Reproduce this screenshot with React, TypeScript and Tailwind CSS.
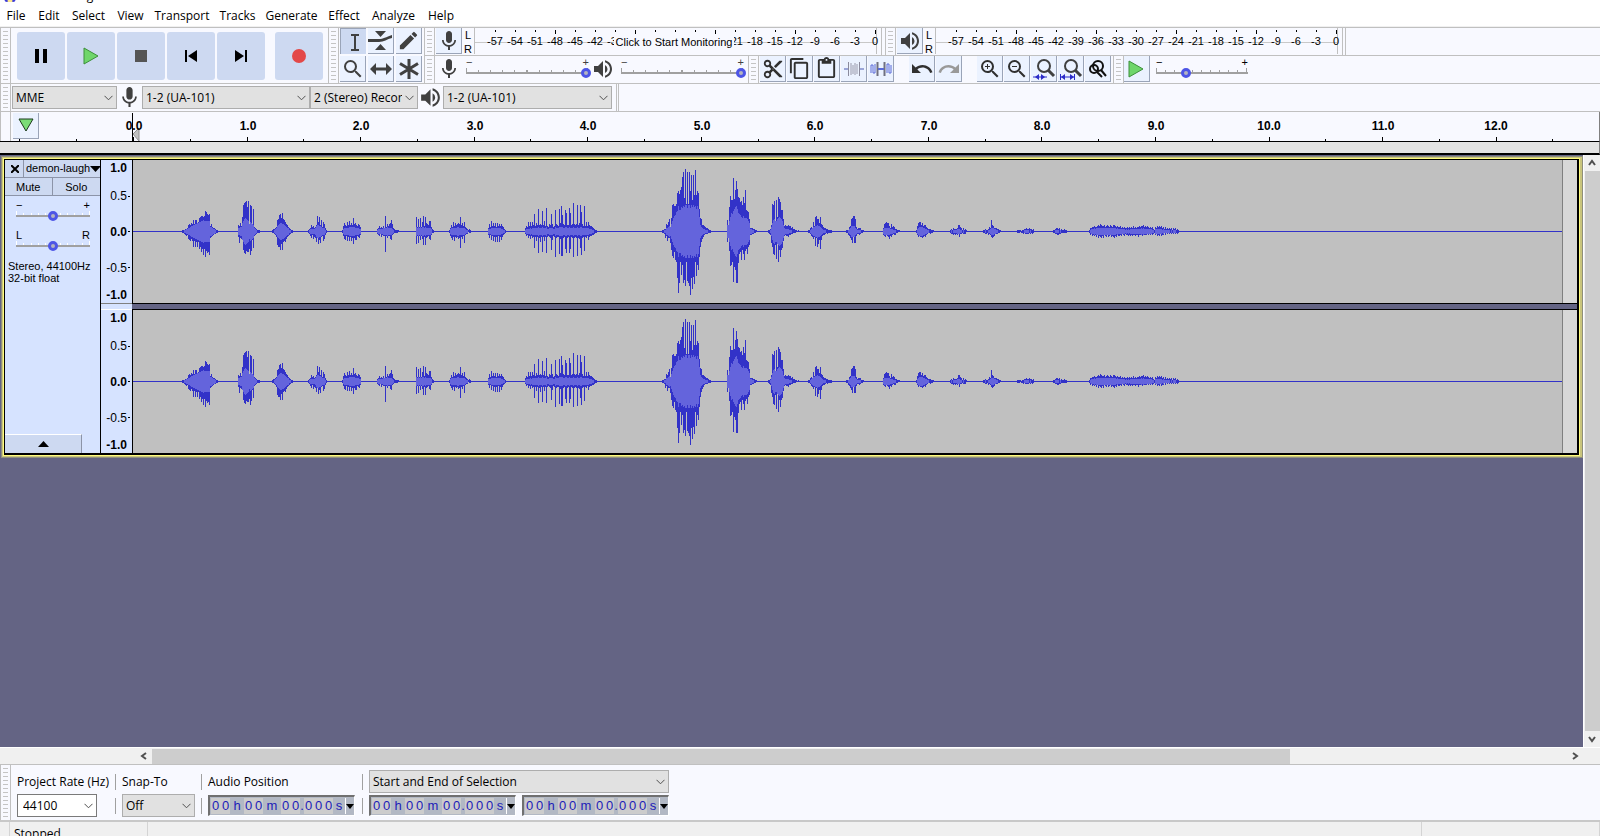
import type { ReactNode } from 'react'
import {
  MdContentCopy,
  MdContentCut,
  MdContentPaste,
  MdEdit,
  MdMic,
  MdRedo,
  MdSearch,
  MdUndo,
  MdVolumeUp,
  MdZoomIn,
  MdZoomOut,
} from 'react-icons/md'

const menus = [
  { label: 'File', width: 'w-[32px]' },
  { label: 'Edit', width: 'w-[34px]' },
  { label: 'Select', width: 'w-[45px]' },
  { label: 'View', width: 'w-[39px]' },
  { label: 'Transport', width: 'w-[64px]' },
  { label: 'Tracks', width: 'w-[47px]' },
  { label: 'Generate', width: 'w-[61px]' },
  { label: 'Effect', width: 'w-[44px]' },
  { label: 'Analyze', width: 'w-[55px]' },
  { label: 'Help', width: 'w-[40px]' },
]

const meterLabels = [
  '-57', '-54', '-51', '-48', '-45', '-42', '-39', '-36', '-33', '-30',
  '-27', '-24', '-21', '-18', '-15', '-12', '-9', '-6', '-3', '0',
]

type Burst = { x: number; up: number[]; down: number[]; rms: number[] }

// One number per pixel column: peak above, peak below, rms
const bursts: Burst[] = [
  {
    x: 182,
    up: [1, 1, 1, 2, 2, 3, 6, 7, 6, 8, 7, 11, 7, 11, 11, 8, 9, 13, 14, 15, 15, 14, 15, 20, 19, 17, 16, 17, 5, 7, 4, 3, 3, 2, 1, 1],
    down: [1, 1, 2, 3, 4, 3, 7, 8, 9, 7, 9, 15, 9, 15, 10, 15, 10, 17, 15, 20, 17, 23, 17, 25, 19, 21, 20, 23, 6, 5, 4, 3, 2, 2, 1, 1],
    rms: [0, 0, 1, 1, 2, 2, 3, 3, 4, 5, 5, 6, 6, 7, 7, 8, 8, 9, 9, 10, 10, 11, 10, 10, 10, 10, 10, 10, 4, 4, 3, 2, 2, 1, 0, 0],
  },
  {
    x: 238,
    up: [6, 5, 8, 5, 14, 26, 28, 29, 30, 24, 30, 7, 26, 25, 7, 22, 4, 3, 2, 1, 1, 1],
    down: [5, 11, 6, 7, 8, 18, 21, 22, 19, 20, 20, 17, 23, 19, 8, 16, 4, 3, 2, 1, 1, 1],
    rms: [3, 3, 4, 4, 8, 10, 12, 13, 12, 11, 10, 7, 9, 8, 7, 6, 3, 2, 1, 0, 0, 0],
  },
  {
    x: 272,
    up: [1, 2, 2, 3, 4, 11, 12, 16, 17, 13, 18, 12, 11, 9, 7, 6, 4, 3, 2, 1, 1],
    down: [1, 1, 2, 3, 5, 13, 15, 15, 18, 12, 18, 10, 9, 10, 7, 5, 4, 3, 2, 1, 1],
    rms: [0, 0, 1, 2, 3, 5, 6, 7, 8, 8, 7, 7, 6, 5, 4, 3, 3, 1, 1, 0, 0],
  },
  {
    x: 308,
    up: [1, 2, 3, 6, 4, 5, 3, 4, 6, 15, 9, 14, 6, 11, 4, 9, 7, 3, 1],
    down: [1, 2, 4, 6, 3, 7, 5, 6, 10, 6, 12, 8, 11, 5, 4, 9, 7, 3, 1],
    rms: [0, 1, 2, 2, 2, 2, 2, 3, 5, 6, 6, 5, 5, 4, 3, 3, 3, 1, 0],
  },
  {
    x: 342,
    up: [1, 5, 8, 6, 5, 9, 6, 10, 6, 8, 6, 13, 7, 8, 6, 5, 7, 6, 4],
    down: [1, 4, 7, 8, 4, 9, 5, 9, 5, 9, 6, 12, 6, 8, 8, 4, 5, 6, 3],
    rms: [0, 2, 3, 3, 3, 3, 3, 4, 4, 4, 4, 4, 4, 3, 3, 3, 3, 2, 2],
  },
  {
    x: 377,
    up: [2, 3, 5, 3, 4, 3, 5, 3, 15, 4, 7, 5, 7, 8, 11, 7, 3, 2, 1, 1, 1, 1],
    down: [2, 3, 4, 2, 5, 3, 4, 4, 20, 4, 6, 4, 4, 7, 8, 3, 2, 1, 1, 1, 1, 0],
    rms: [1, 2, 2, 2, 2, 2, 3, 3, 3, 3, 4, 3, 3, 3, 3, 2, 1, 0, 0, 0, 0, 0],
  },
  {
    x: 416,
    up: [14, 4, 12, 4, 13, 4, 9, 15, 5, 14, 8, 7, 6, 10, 10, 4, 2, 1],
    down: [12, 4, 11, 4, 8, 4, 7, 13, 5, 13, 6, 5, 4, 7, 8, 3, 1, 1],
    rms: [4, 3, 4, 3, 4, 3, 4, 4, 3, 4, 3, 3, 3, 3, 3, 2, 0, 0],
  },
  {
    x: 449,
    up: [1, 3, 6, 4, 9, 5, 8, 6, 7, 8, 7, 14, 6, 8, 5, 9, 4, 3, 2, 1, 2, 1],
    down: [1, 4, 6, 8, 5, 9, 5, 6, 5, 7, 6, 16, 5, 7, 4, 11, 3, 2, 2, 0, 1, 1],
    rms: [0, 2, 3, 3, 3, 3, 3, 3, 4, 4, 3, 3, 3, 3, 3, 3, 2, 1, 1, 0, 0, 0],
  },
  {
    x: 488,
    up: [3, 7, 4, 10, 5, 8, 5, 8, 4, 8, 5, 7, 5, 7, 5, 4, 2, 1],
    down: [3, 6, 3, 8, 4, 9, 5, 10, 5, 10, 4, 10, 5, 8, 5, 3, 2, 1],
    rms: [2, 2, 2, 3, 3, 3, 3, 3, 3, 3, 3, 3, 3, 2, 2, 1, 1, 0],
  },
  {
    x: 525,
    up: [
      3, 5, 4, 9, 5, 9, 5, 9, 6, 17, 5, 8, 6, 22, 6, 7, 6, 20, 6, 10, 5, 23, 5, 4, 7, 6, 17, 7, 4, 5, 21, 7, 6, 5, 22, 8,
      25, 16, 7, 6, 21, 18, 6, 6, 23, 18, 6, 7, 28, 7, 6, 7, 26, 6, 8, 26, 19, 7, 5, 25, 5, 9, 5, 9, 6, 5, 5, 4, 3, 2, 1, 1,
    ],
    down: [
      2, 4, 3, 6, 4, 7, 4, 6, 5, 16, 5, 9, 5, 21, 6, 10, 5, 20, 5, 9, 5, 21, 5, 4, 5, 6, 18, 8, 4, 5, 25, 6, 5, 5, 22, 7,
      24, 24, 6, 5, 17, 21, 6, 5, 21, 17, 5, 6, 25, 6, 5, 6, 24, 6, 7, 16, 23, 6, 5, 19, 5, 6, 4, 8, 5, 4, 4, 3, 3, 2, 1, 1,
    ],
    rms: [
      1, 2, 2, 2, 2, 3, 2, 3, 3, 3, 3, 3, 3, 4, 3, 3, 3, 4, 3, 3, 3, 4, 2, 2, 3, 3, 3, 3, 2, 2, 4, 3, 3, 3, 4, 4,
      4, 4, 3, 3, 4, 4, 3, 3, 4, 3, 3, 3, 4, 3, 3, 3, 4, 3, 3, 4, 4, 3, 3, 3, 3, 3, 3, 3, 2, 2, 2, 1, 1, 0, 0, 0,
    ],
  },
  {
    x: 662,
    up: [
      1, 1, 2, 2, 7, 6, 9, 12, 4, 13, 26, 27, 25, 25, 27, 38, 40, 37, 41, 44, 54, 59, 33, 62, 27, 59, 27, 59, 40, 56, 31, 56,
      36, 61, 36, 40, 38, 22, 13, 12, 6, 6, 5, 4, 3, 3, 2, 1, 1,
    ],
    down: [
      1, 1, 2, 6, 4, 9, 6, 6, 11, 18, 24, 26, 20, 28, 30, 46, 61, 51, 30, 43, 33, 51, 48, 54, 30, 49, 51, 54, 63, 46, 57, 45,
      52, 30, 44, 33, 38, 25, 15, 10, 7, 5, 3, 2, 2, 2, 1, 1, 1,
    ],
    rms: [
      0, 0, 1, 1, 3, 3, 4, 5, 4, 7, 10, 13, 15, 16, 19, 20, 25, 21, 21, 24, 23, 25, 24, 26, 26, 23, 26, 26, 23, 26, 24, 26,
      24, 25, 22, 25, 22, 14, 6, 4, 3, 2, 2, 1, 1, 1, 0, 0, 0,
    ],
  },
  {
    x: 727,
    up: [11, 6, 24, 35, 31, 31, 53, 32, 41, 50, 42, 34, 33, 29, 30, 26, 34, 28, 41, 21, 20, 19, 12, 3, 3, 3, 2, 2, 1, 1],
    down: [10, 6, 19, 34, 33, 30, 50, 35, 38, 51, 51, 31, 22, 20, 28, 18, 22, 28, 19, 17, 22, 15, 13, 3, 3, 2, 2, 1, 1, 0],
    rms: [6, 6, 10, 14, 18, 17, 20, 22, 24, 25, 22, 18, 17, 16, 14, 13, 15, 13, 13, 13, 12, 10, 8, 2, 2, 1, 1, 0, 0, 0],
  },
  {
    x: 768,
    up: [1, 1, 2, 6, 27, 26, 30, 8, 31, 14, 34, 32, 29, 21, 21, 12, 5, 6, 5, 5, 6, 5, 5, 3, 4, 2, 2, 1, 1, 0, 1],
    down: [1, 2, 3, 11, 15, 22, 23, 13, 27, 12, 30, 18, 25, 18, 16, 9, 4, 3, 4, 4, 5, 3, 3, 2, 2, 1, 1, 1, 0, 0, 0],
    rms: [0, 0, 1, 4, 8, 11, 12, 10, 10, 12, 13, 14, 13, 12, 10, 6, 3, 2, 2, 2, 2, 1, 1, 1, 0, 0, 0, 0, 0, 0, 0],
  },
  {
    x: 808,
    up: [1, 1, 3, 4, 3, 9, 5, 14, 15, 12, 12, 8, 14, 7, 6, 4, 3, 3, 2, 2, 1, 1, 1, 1],
    down: [1, 1, 2, 4, 5, 7, 5, 14, 6, 15, 12, 8, 17, 8, 4, 3, 3, 2, 1, 2, 1, 1, 1, 1],
    rms: [0, 0, 1, 2, 3, 4, 4, 5, 5, 6, 5, 5, 4, 3, 2, 1, 1, 1, 0, 0, 0, 0, 0, 0],
  },
  {
    x: 846,
    up: [1, 1, 1, 4, 5, 12, 13, 15, 15, 12, 4, 2, 3, 3, 3, 1, 1, 1],
    down: [1, 1, 3, 4, 6, 8, 11, 5, 11, 11, 4, 2, 2, 3, 2, 1, 1, 0],
    rms: [0, 0, 1, 2, 3, 5, 5, 5, 5, 3, 2, 1, 1, 1, 1, 0, 0, 0],
  },
  {
    x: 883,
    up: [3, 7, 8, 9, 8, 8, 5, 3, 7, 4, 5, 4, 2, 2, 1, 1, 1],
    down: [3, 4, 5, 3, 4, 5, 7, 4, 5, 3, 2, 3, 3, 1, 1, 0, 0],
    rms: [2, 3, 3, 3, 3, 3, 3, 2, 2, 2, 1, 1, 1, 0, 0, 0, 0],
  },
  {
    x: 916,
    up: [1, 5, 8, 9, 9, 6, 8, 5, 6, 6, 4, 3, 2, 2, 2, 1, 1, 1],
    down: [1, 3, 5, 4, 5, 5, 6, 5, 4, 5, 3, 2, 1, 1, 2, 1, 1, 0],
    rms: [0, 2, 3, 4, 4, 4, 4, 3, 3, 2, 2, 1, 1, 0, 0, 0, 0, 0],
  },
  {
    x: 950,
    up: [1, 2, 1, 3, 2, 2, 2, 3, 6, 6, 4, 3, 1, 3, 1, 2, 1],
    down: [1, 2, 2, 3, 2, 3, 2, 3, 2, 5, 2, 2, 1, 2, 2, 2, 0],
    rms: [0, 1, 0, 1, 1, 1, 1, 2, 2, 2, 1, 1, 0, 1, 0, 0, 0],
  },
  {
    x: 983,
    up: [1, 1, 2, 1, 1, 2, 4, 3, 11, 6, 5, 3, 3, 3, 2, 2, 1, 1],
    down: [1, 1, 2, 2, 1, 3, 2, 3, 5, 6, 5, 4, 2, 2, 2, 1, 1, 0],
    rms: [0, 0, 1, 0, 0, 1, 1, 2, 3, 3, 3, 2, 2, 1, 1, 0, 0, 0],
  },
  {
    x: 1017,
    up: [1, 1, 1, 1, 0, 1, 1, 2, 2, 3, 2, 2, 3, 2, 2, 1, 2],
    down: [1, 1, 1, 0, 1, 1, 2, 1, 2, 2, 2, 2, 1, 2, 1, 2, 1],
    rms: [0, 0, 0, 0, 0, 0, 0, 1, 1, 1, 1, 1, 0, 1, 0, 0, 0],
  },
  {
    x: 1053,
    up: [1, 1, 2, 3, 3, 2, 3, 1, 2, 1, 1, 2, 1, 1],
    down: [1, 1, 2, 2, 3, 3, 2, 2, 1, 1, 1, 1, 1, 1],
    rms: [0, 0, 1, 1, 1, 1, 0, 1, 0, 0, 0, 0, 0, 0],
  },
  {
    x: 1089,
    up: [
      1, 3, 3, 4, 4, 5, 4, 4, 5, 6, 5, 7, 6, 5, 5, 6, 4, 5, 6, 5, 4, 6, 5, 4, 6, 6, 5, 4, 5, 4, 4, 5, 3, 4, 3, 4, 3, 3, 4, 3,
      4, 3, 4, 3, 5, 3, 4, 3, 4, 4, 5, 4, 5, 5, 6, 4, 5, 4, 5, 4, 3, 4, 3, 4, 2, 1, 4, 3, 5, 4, 5, 4, 5, 3, 4, 2, 4, 2, 3, 2,
      3, 2, 3, 1, 3, 2, 3, 1, 2, 1,
    ],
    down: [
      1, 3, 2, 4, 3, 4, 3, 5, 3, 6, 4, 5, 6, 4, 6, 3, 4, 5, 3, 5, 4, 3, 5, 4, 5, 6, 4, 5, 3, 4, 4, 3, 4, 2, 3, 4, 2, 3, 3, 4,
      3, 4, 3, 4, 3, 3, 4, 3, 3, 5, 3, 3, 3, 4, 3, 3, 3, 3, 2, 3, 2, 3, 2, 3, 2, 1, 3, 2, 4, 3, 4, 2, 4, 3, 3, 1, 3, 1, 2, 1,
      2, 1, 2, 1, 2, 1, 2, 1, 2, 1,
    ],
    rms: [
      0, 1, 2, 2, 2, 3, 2, 3, 3, 3, 3, 3, 3, 3, 3, 3, 3, 3, 3, 3, 3, 3, 3, 3, 3, 3, 3, 2, 3, 2, 2, 2, 2, 2, 2, 2, 1, 2, 1, 2,
      1, 2, 2, 2, 2, 2, 2, 2, 2, 2, 2, 2, 3, 2, 3, 2, 2, 2, 2, 2, 2, 2, 2, 1, 1, 0, 2, 2, 2, 2, 2, 2, 2, 1, 2, 1, 1, 1, 1, 1,
      1, 0, 1, 0, 1, 1, 1, 0, 0, 0,
    ],
  },
]

const CLIP_LEFT = 133
const MID = 71

const column = (x: number, up: number, down: number) =>
  `M${x - CLIP_LEFT} ${MID - up}h1v${up + down + 1}h-1z`

const peakPath = bursts
  .map((b) => b.up.map((u, i) => column(b.x + i, u, b.down[i] ?? 0)).join(''))
  .join('')

const rmsPath = bursts
  .map((b) => b.rms.map((r, i) => (r > 0 ? column(b.x + i, r, r) : '')).join(''))
  .join('')

function Waveform({ label }: { label: string }) {
  return (
    <div className="flex min-w-0 flex-1 bg-[#c0c0c0]">
      <svg
        role="img"
        aria-label={label}
        viewBox="0 0 1429 143"
        preserveAspectRatio="none"
        shapeRendering="crispEdges"
        className="block h-[143px] min-w-0 flex-1"
      >
        <rect x="0" y={MID} width="1429" height="1" fill="#3232c8" />
        <path d={peakPath} fill="#3232c8" />
        <path d={rmsPath} fill="#6464dc" />
      </svg>
      <div className="w-[15px] border-l border-[#808080] bg-[#d8d8d8]" />
    </div>
  )
}

function Gripper() {
  return (
    <div className="flex w-[11px] shrink-0 items-center justify-center self-stretch border-x border-[#c0c0c0] py-[3px]">
      <div className="h-full w-[5px] bg-[repeating-linear-gradient(to_bottom,#c4c4c4_0px,#c4c4c4_1px,transparent_1px,transparent_4px)]" />
    </div>
  )
}

function ToolButton({ label, pressed, children }: { label: string; pressed?: boolean; children?: ReactNode }) {
  return (
    <button
      type="button"
      aria-label={label}
      className={
        pressed
          ? 'flex h-[26px] w-[26px] items-center justify-center border-t border-l border-[#9aa4b8] bg-[#cdd9f1]'
          : 'flex h-[26px] w-[26px] items-center justify-center border-r border-b border-[#9aa4b8] bg-[#ebf2ff]'
      }
    >
      {children}
    </button>
  )
}

function TransportButton({ label, children }: { label: string; children: ReactNode }) {
  return (
    <button
      type="button"
      aria-label={label}
      className="flex h-[48px] w-[48px] items-center justify-center rounded-[3px] bg-[#cdd9f1]"
    >
      <svg width="20" height="20" viewBox="0 0 20 20">
        {children}
      </svg>
    </button>
  )
}

type SliderProps = { label: string; value: number; width: string; left?: string; right?: string; light?: boolean }

function Slider({ label, value, width, left = '−', right = '+', light }: SliderProps) {
  return (
    <label className={`flex flex-col ${width} font-['Liberation_Sans',sans-serif] text-[11px] leading-[10px]`}>
      <span className="flex justify-between pr-[2px]">
        <span>{left}</span>
        <span>{right}</span>
      </span>
      <span className="grid h-[11px]">
        <svg
          viewBox="0 0 122 11"
          preserveAspectRatio="none"
          shapeRendering="crispEdges"
          className="col-start-1 row-start-1 h-[11px] w-full pr-[2px]"
        >
          {Array.from({ length: 11 }, (_, i) => (
            <rect
              key={i}
              x={i * 12}
              y={i % 10 === 0 ? 1 : 3}
              width={light ? 2 : 1}
              height={i % 10 === 0 ? 5 : 3}
              fill={light ? '#ffffff' : '#a0a0a0'}
            />
          ))}
          <rect x="0" y="5" width="122" height="2" fill="#a0a0a0" />
        </svg>
        <input
          type="range"
          aria-label={label}
          defaultValue={value}
          className="col-start-1 row-start-1 m-0 h-[11px] w-full appearance-none bg-transparent [&::-webkit-slider-thumb]:h-[10px] [&::-webkit-slider-thumb]:w-[10px] [&::-webkit-slider-thumb]:appearance-none [&::-webkit-slider-thumb]:rounded-full [&::-webkit-slider-thumb]:border-[3px] [&::-webkit-slider-thumb]:border-[#4d55e6] [&::-webkit-slider-thumb]:bg-[#b4b4c0]"
        />
      </span>
    </label>
  )
}

function Chevron() {
  return (
    <svg
      width="9"
      height="6"
      viewBox="0 0 9 6"
      fill="none"
      stroke="#505050"
      className="pointer-events-none col-start-1 row-start-1 mr-[4px] self-center justify-self-end"
    >
      <path d="M.5 .8 4.5 4.8 8.5 .8" />
    </svg>
  )
}

function Select({ id, label, text, width }: { id?: string; label?: string; text: string; width: string }) {
  return (
    <span className={`grid shrink-0 ${width}`}>
      <select
        id={id}
        aria-label={label}
        className="col-start-1 row-start-1 h-[23px] w-full min-w-0 appearance-none border border-[#adadad] bg-[#e1e1e1] pr-[15px] pl-[3px] text-black"
      >
        <option>{text}</option>
      </select>
      <Chevron />
    </span>
  )
}

function Meter({ label, monitoring }: { label: string; monitoring?: boolean }) {
  return (
    <div className="flex font-['Liberation_Sans',sans-serif] text-[11px] leading-[14px]">
      <div className="flex w-[12px] flex-col items-center">
        <span>L</span>
        <span>R</span>
      </div>
      <div
        aria-label={label}
        className="relative flex h-[26px] w-[403px] border-x border-[#c0c0c0] bg-[linear-gradient(#c8c8c8,#c8c8c8)] bg-[length:100%_1px] bg-[position:0_14px] bg-no-repeat pl-[10px]"
      >
        {meterLabels.map((text, i) => (
          <div key={text} className="flex w-[20px] shrink-0 flex-col items-center">
            <span className={i % 4 === 3 ? 'mt-[2px] h-[4px] w-px bg-black' : 'mt-[2px] mb-[2px] h-[2px] w-px bg-black'} />
            {/* the monitoring prompt sits over the middle of the scale */}
            {!(monitoring && i > 6 && i < 12) && <span>{text}</span>}
          </div>
        ))}
        {monitoring && (
          <button
            type="button"
            className="absolute top-[7px] left-[139px] h-[14px] w-[120px] bg-[#f8f9ff] whitespace-nowrap"
          >
            Click to Start Monitoring
          </button>
        )}
      </div>
    </div>
  )
}

function TransportToolbar() {
  return (
    <div className="flex shrink-0 items-center gap-[2px] pr-[5px] pl-[6px]">
      <TransportButton label="Pause">
        <path d="M4 3h4v14H4zM12 3h4v14h-4z" fill="#000" />
      </TransportButton>
      <TransportButton label="Play">
        <path d="M3 2v16l14-8z" fill="#6fd66b" stroke="#3c8f3a" />
      </TransportButton>
      <TransportButton label="Stop">
        <path d="M4 4h12v12H4z" fill="#555" />
      </TransportButton>
      <TransportButton label="Skip to Start">
        <path d="M4 4h2v12H4zM16 4v12l-9-6z" fill="#000" />
      </TransportButton>
      <TransportButton label="Skip to End">
        <path d="M14 4h2v12h-2zM4 4v12l9-6z" fill="#000" />
      </TransportButton>
      <div className="w-[6px]" />
      <TransportButton label="Record">
        <circle cx="10" cy="10" r="7" fill="#e34848" />
      </TransportButton>
    </div>
  )
}

function ToolsToolbar() {
  return (
    <div className="grid shrink-0 grid-cols-[26px_26px_26px] content-start gap-[2px] px-px text-[#404040]">
      <ToolButton label="Selection Tool" pressed>
        <svg width="18" height="20" viewBox="0 0 18 20" fill="none" stroke="#404040" strokeWidth="2">
          <path d="M6 3h8M6 18h8M10 3v15" />
        </svg>
      </ToolButton>
      <ToolButton label="Envelope Tool">
        <svg width="25" height="22" viewBox="0 0 25 22" fill="#404040">
          <path d="M7 1h11l-5.500 6zM7 20h11l-5.500-6zM0 9h11c4 0 7-2 13-4v3c-5 1-8 4-13 4H0z" />
        </svg>
      </ToolButton>
      <ToolButton label="Draw Tool">
        <MdEdit size={23} />
      </ToolButton>
      <ToolButton label="Zoom Tool">
        <MdSearch size={24} />
      </ToolButton>
      <ToolButton label="Time Shift Tool">
        <svg width="22" height="14" viewBox="0 0 22 14" fill="#404040">
          <path d="M0 7l6-6v4.500h10V1l6 6-6 6V8.500H6V13z" />
        </svg>
      </ToolButton>
      <ToolButton label="Multi-Tool">
        <svg width="22" height="22" viewBox="0 0 22 22" stroke="#404040" strokeWidth="3">
          <path d="M11 1v20M2 5.500l18 11M20 5.500l-18 11" />
        </svg>
      </ToolButton>
    </div>
  )
}

function EditToolbar() {
  return (
    <div className="flex shrink-0 gap-px pl-px text-[#303030]">
      <ToolButton label="Cut">
        <MdContentCut size={22} />
      </ToolButton>
      <ToolButton label="Copy">
        <MdContentCopy size={23} />
      </ToolButton>
      <ToolButton label="Paste">
        <MdContentPaste size={23} />
      </ToolButton>
      <ToolButton label="Trim Audio">
        <svg width="20" height="16" viewBox="0 0 20 16" fill="none">
          <path d="M0 8h4M16 8h4" stroke="#9aa5d8" strokeWidth="2" />
          <path d="M4.500 1v14M15.500 1v14" stroke="#8a8a9c" />
          <path d="M7 2v12M9 4v9M11 2v12M13 3v10" stroke="#9a9aac" />
        </svg>
      </ToolButton>
      <ToolButton label="Silence Audio">
        <svg width="22" height="16" viewBox="0 0 22 16" fill="none">
          <path d="M1 12V4h2v8h2V3M17 12V3h2v9h2V4" stroke="#5a6ad8" />
          <path d="M7.500 1v14M14.500 1v14" stroke="#707080" strokeWidth="2" />
          <path d="M8 8h6" stroke="#5a6ad8" strokeWidth="2" />
        </svg>
      </ToolButton>
      <div className="w-[13px]" />
      <ToolButton label="Undo">
        <MdUndo size={24} />
      </ToolButton>
      <ToolButton label="Redo">
        <MdRedo size={24} className="text-[#999]" />
      </ToolButton>
      <div className="w-[13px]" />
      <ToolButton label="Zoom In">
        <MdZoomIn size={24} />
      </ToolButton>
      <ToolButton label="Zoom Out">
        <MdZoomOut size={24} />
      </ToolButton>
      <ToolButton label="Fit Selection to Width">
        <svg width="24" height="24" viewBox="0 0 24 24" fill="none">
          <circle cx="12" cy="9" r="6" stroke="#404040" strokeWidth="2" />
          <path d="M16 13l6 6" stroke="#404040" strokeWidth="3" />
          <path d="M1 20h14" stroke="#2b2bc8" />
          <path d="M7 17v6l-4-3zM9 17v6l4-3z" fill="#2b2bc8" />
        </svg>
      </ToolButton>
      <ToolButton label="Fit Project to Width">
        <svg width="24" height="24" viewBox="0 0 24 24" fill="none">
          <circle cx="12" cy="9" r="6" stroke="#404040" strokeWidth="2" />
          <path d="M16 13l6 6" stroke="#404040" strokeWidth="3" />
          <path d="M1.500 17v6M15.500 17v6M2 20h13" stroke="#2b2bc8" />
          <path d="M6 17v6l-4-3zM11 17v6l4-3z" fill="#2b2bc8" />
        </svg>
      </ToolButton>
      <ToolButton label="Zoom Toggle">
        <svg width="22" height="22" viewBox="0 0 22 22" fill="none" stroke="#111" strokeWidth="2">
          <circle cx="11" cy="8" r="5" />
          <circle cx="7" cy="11" r="4" />
          <path d="M14 12l5 6M10 14l5 5" />
        </svg>
      </ToolButton>
    </div>
  )
}

function DeviceToolbar() {
  return (
    <div className="flex h-[28px] items-center border-b border-[#c0c0c0]">
      <Gripper />
      <div className="w-px" />
      <Select label="Audio Host" text="MME" width="w-[105px]" />
      <MdMic size={25} className="shrink-0 text-[#404040]" />
      <Select label="Recording Device" text="1-2 (UA-101)" width="w-[168px]" />
      <Select label="Recording Channels" text="2 (Stereo) Recording Channels" width="w-[108px]" />
      <MdVolumeUp size={25} className="shrink-0 text-[#404040]" />
      <Select label="Playback Device" text="1-2 (UA-101)" width="w-[169px]" />
      <div className="ml-[4px] w-[3px] self-stretch border-x border-[#c0c0c0]" />
    </div>
  )
}

function Timeline() {
  return (
    <div className="flex h-[30px] border-r border-b border-r-[#808080] border-b-black">
      <div className="w-[11px] shrink-0 border-x border-[#c0c0c0]" />
      <div className="w-[122px] shrink-0 pt-px pl-[2px]">
        <ToolButton label="Timeline Options">
          <svg width="16" height="15" viewBox="0 0 16 15">
            <path d="M1 1h14L8 13z" fill="#7bdc76" stroke="#1c3a1c" />
          </svg>
        </ToolButton>
      </div>
      <svg
        role="img"
        aria-label="Timeline"
        viewBox="0 0 1466 29"
        preserveAspectRatio="xMinYMin slice"
        className="h-[29px] min-w-0 flex-1 overflow-visible"
      >
        <path d="M6 16v13L0 22z" fill="#c0c0c0" stroke="#909090" />
        <g shapeRendering="crispEdges">
          <rect x="-1" y="1" width="1" height="28" />
          <rect x="-114" y="27" width="1" height="2" />
          <rect x="-57" y="27" width="1" height="2" />
          {Array.from({ length: 26 }, (_, i) => (
            <rect
              key={i}
              x={Math.round(i * 56.775)}
              y={i % 2 ? 27 : 25}
              width="1"
              height={i % 2 ? 2 : 4}
            />
          ))}
        </g>
        <g textAnchor="middle" className="font-['Liberation_Sans',sans-serif] text-[12px] font-bold">
          {Array.from({ length: 13 }, (_, i) => (
            <text key={i} x={Math.round(i * 113.5) + 1} y="18">
              {i.toFixed(1)}
            </text>
          ))}
        </g>
      </svg>
    </div>
  )
}

function TrackPanel() {
  return (
    <div className="flex w-[96px] shrink-0 flex-col border-r border-black bg-[#d6e3ff]">
      <div className="flex h-[18px] border-b border-[#8c94a8] bg-[#cdd9f1]">
        <button type="button" aria-label="Close track" className="flex w-[19px] items-center justify-center border-r border-[#8c94a8] pl-px">
          <svg width="8" height="8" viewBox="0 0 8 8" stroke="#000" strokeWidth="2">
            <path d="M0 0l8 8M8 0l-8 8" />
          </svg>
        </button>
        <button type="button" className="flex min-w-0 flex-1 items-center justify-between pr-px pl-[2px] whitespace-nowrap">
          demon-laugh
          <svg width="11" height="6" viewBox="0 0 11 6" className="shrink-0">
            <path d="M0 0h11L5.500 6z" />
          </svg>
        </button>
      </div>
      <div className="grid h-[18px] grid-cols-2 border-b border-[#8c94a8] bg-[#cdd9f1]">
        <button type="button" className="border-r border-[#8c94a8] pt-px">Mute</button>
        <button type="button" className="pt-px">Solo</button>
      </div>
      <div className="flex flex-col gap-[9px] pt-[4px] pl-[11px]">
        <Slider label="Gain" value={49} width="w-[76px]" light />
        <Slider label="Pan" value={49} width="w-[76px]" left="L" right="R" light />
      </div>
      <div className="pt-[9px] pl-[3px] leading-[12px] whitespace-nowrap">
        <div>Stereo, 44100Hz</div>
        <div>32-bit float</div>
      </div>
      <button
        type="button"
        aria-label="Collapse track"
        className="mt-auto flex h-[19px] w-[77px] items-center justify-center border-t border-r border-t-white border-r-[#8c94a8] bg-[#cdd9f1]"
      >
        <svg width="11" height="6" viewBox="0 0 11 6">
          <path d="M0 6h11L5.500 0z" />
        </svg>
      </button>
    </div>
  )
}

const amplitudes = [
  { text: '1.0', bold: true, tick: false },
  { text: '0.5', bold: false, tick: true },
  { text: '0.0', bold: true, tick: true },
  { text: '-0.5', bold: false, tick: true },
  { text: '-1.0', bold: true, tick: false },
]

function AmplitudeRuler() {
  return (
    <div className="grid h-[143px] grid-rows-[15px_42px_29px_43px_11px] pr-[2px] text-[12px] leading-[14px]">
      {amplitudes.map((a) => (
        <span key={a.text} className={`flex items-center justify-end gap-px ${a.bold ? 'font-bold' : ''}`}>
          {a.text}
          <span className={a.tick ? 'h-px w-[2px] bg-black' : 'w-[2px]'} />
        </span>
      ))}
    </div>
  )
}

function Channel({ label }: { label: string }) {
  return (
    <div className="flex">
      <div className="w-[31px] shrink-0 bg-[#d6e3ff]">
        <AmplitudeRuler />
      </div>
      <div className="w-px bg-black" />
      <Waveform label={label} />
    </div>
  )
}

function Track() {
  return (
    <div className="border border-[#8f8f7c] bg-[#c9c57c] py-px pr-[2px] pl-px">
      <div className="border border-[#fffb7d] bg-black">
        <div className="flex border-t border-r-2 border-b-2 border-l border-black font-['Liberation_Sans',sans-serif] text-[11px]">
          <TrackPanel />
          <div className="min-w-0 flex-1">
            <Channel label="Left channel" />
            <div className="flex h-[7px]">
              <div className="w-[31px] border-t border-b border-t-[#808080] border-b-white bg-[#d6e3ff]" />
              <div className="flex-1 border-y border-black bg-[#646484]" />
            </div>
            <Channel label="Right channel" />
          </div>
        </div>
      </div>
    </div>
  )
}

function ScrollArrow({ label, d }: { label: string; d: string }) {
  return (
    <button type="button" aria-label={label} className="flex h-[16px] w-[16px] shrink-0 items-center justify-center">
      <svg width="8" height="8" viewBox="0 0 8 8" fill="none" stroke="#505050" strokeWidth="2">
        <path d={d} />
      </svg>
    </button>
  )
}

const timeGroups = [
  { digits: ['0', '0'], unit: 'h', unitWidth: 'w-[14px]' },
  { digits: ['0', '0'], unit: 'm', unitWidth: 'w-[18px]' },
  { digits: ['0', '0'], unit: '.', unitWidth: 'w-[4px]' },
  { digits: ['0', '0', '0'], unit: 's', unitWidth: 'w-[12px]' },
]

function TimeControl({ label }: { label: string }) {
  return (
    <div
      role="group"
      aria-label={label}
      className="flex h-[21px] w-[147px] border-t-2 border-r border-b border-l-2 border-t-[#707070] border-r-white border-b-white border-l-[#707070] bg-[#b2b8c4] py-px pl-px font-['Liberation_Sans',sans-serif] text-[13px] leading-[16px] text-[#1c1cb8]"
    >
      {timeGroups.map((g) => (
        <div key={g.unit} className="flex shrink-0">
          <span className="flex gap-px bg-[#cccccc]">
            {g.digits.map((d, i) => (
              <span key={i} className="w-[9px] text-center">
                {d}
              </span>
            ))}
          </span>
          <span className={`${g.unitWidth} text-center`}>{g.unit}</span>
        </div>
      ))}
      <button
        type="button"
        aria-label={`${label} format`}
        className="ml-auto flex w-[9px] shrink-0 items-center justify-center border-l border-white"
      >
        <svg width="8" height="5" viewBox="0 0 8 5" className="shrink-0">
          <path d="M0 0h8L4 5z" />
        </svg>
      </button>
    </div>
  )
}

function Divider() {
  return (
    <div className="flex w-px flex-col gap-[8px]">
      <div className="h-[16px] bg-[#a0a0a0]" />
      <div className="h-[16px] bg-[#a0a0a0]" />
    </div>
  )
}

function SelectionToolbar() {
  return (
    <div className="flex h-[55px] shrink-0 items-center">
      <Gripper />
      <div className="flex items-center pt-[2px] pl-[6px]">
        <div className="flex w-[98px] flex-col">
          <label htmlFor="rate" className="flex h-[24px] items-center whitespace-nowrap">Project Rate (Hz)</label>
          <span className="grid w-[80px]">
            <input
              id="rate"
              type="text"
              defaultValue="44100"
              className="col-start-1 row-start-1 h-[23px] w-full border border-[#7a7a7a] bg-white pl-[5px]"
            />
            <Chevron />
          </span>
        </div>
        <Divider />
        <div className="flex w-[85px] flex-col pl-[6px]">
          <label htmlFor="snap" className="flex h-[24px] items-center">Snap-To</label>
          <Select id="snap" text="Off" width="w-[73px]" />
        </div>
        <Divider />
        <div className="flex w-[160px] flex-col pl-[6px]">
          <span className="flex h-[24px] items-center">Audio Position</span>
          <span className="flex h-[23px] items-center">
            <TimeControl label="Audio Position" />
          </span>
        </div>
        <Divider />
        <div className="flex flex-col gap-px pl-[6px]">
          <Select label="Selection mode" text="Start and End of Selection" width="w-[300px]" />
          <div className="flex h-[23px] items-center gap-[6px]">
            <TimeControl label="Selection Start" />
            <TimeControl label="Selection End" />
          </div>
        </div>
      </div>
    </div>
  )
}

export default function App() {
  return (
    <div className="flex h-screen flex-col overflow-hidden bg-[#f8f9ff] font-['Open_Sans','Noto_Sans',sans-serif] text-[12px] text-black">
      <header className="shrink-0 bg-white">
        <div className="flex h-[5px] items-end gap-[9px] overflow-hidden pl-[3px]">
          <svg width="14" height="14" viewBox="0 0 14 14" className="shrink-0 pb-[3px]">
            <rect width="14" height="14" rx="3" fill="#3c3cd8" />
            <rect x="4" y="9" width="6" height="5" fill="#ffe88a" />
          </svg>
          <span className="leading-[18px]">demon-laugh</span>
        </div>
        <nav className="flex h-[22px] border-b border-[#f0f0f0] pt-px">
          {menus.map((menu) => (
            <button key={menu.label} type="button" className={`${menu.width} text-center`}>
              {menu.label}
            </button>
          ))}
        </nav>
      </header>

      <div className="shrink-0 border-t border-[#c0c0c0]">
        <div className="flex h-[56px] border-b border-[#c0c0c0]">
          <Gripper />
          <TransportToolbar />
          <Gripper />
          <ToolsToolbar />
          <div className="min-w-0 flex-1 pl-px">
            <div className="flex h-[28px] border-b border-[#c0c0c0]">
              <Gripper />
              <div className="flex pl-px text-[#404040]">
                <ToolButton label="Recording Meter">
                  <MdMic size={24} />
                </ToolButton>
              </div>
              <Meter label="Recording level" monitoring />
              <div className="ml-[4px] w-[4px] border-l border-[#c0c0c0]" />
              <Gripper />
              <div className="flex pl-px text-[#404040]">
                <ToolButton label="Playback Meter">
                  <MdVolumeUp size={24} />
                </ToolButton>
              </div>
              <Meter label="Playback level" />
              <div className="ml-[4px] w-[4px] border-x border-[#c0c0c0]" />
            </div>
            <div className="flex h-[27px]">
              <Gripper />
              <div className="flex items-start pt-px pr-[2px] pl-[2px] text-[#404040]">
                <MdMic size={24} />
                <span className="w-[5px]" />
                <Slider label="Recording Volume" value={100} width="w-[125px]" />
                <MdVolumeUp size={24} />
                <span className="w-[6px]" />
                <Slider label="Playback Volume" value={100} width="w-[125px]" />
              </div>
              <Gripper />
              <EditToolbar />
              <div className="w-[2px]" />
              <Gripper />
              <div className="flex gap-[6px]">
                <ToolButton label="Play-at-Speed">
                  <svg width="17" height="18" viewBox="0 0 17 18">
                    <path d="M1 1v16l14-8z" fill="#6fd66b" stroke="#3c8f3a" />
                  </svg>
                </ToolButton>
                <div className="flex items-start pt-px">
                  <Slider label="Playback Speed" value={30} width="w-[94px]" />
                </div>
              </div>
            </div>
          </div>
        </div>
        <DeviceToolbar />
        <Timeline />
        <div className="h-[13px] border-r border-b-2 border-r-[#808080] border-b-black bg-[#e3e3e3]" />
      </div>

      <main className="flex min-h-0 flex-1">
        <div className="min-w-0 flex-1 bg-[#646484] pt-px pl-px">
          <Track />
        </div>
        <div className="flex w-[17px] shrink-0 flex-col items-center border-l border-white bg-[#f0f0f0]">
          <ScrollArrow label="Scroll up" d="M1 6l3-4 3 4" />
          <div className="w-[15px] flex-1 bg-[#cdcdcd]" />
          <ScrollArrow label="Scroll down" d="M1 2l3 4 3-4" />
        </div>
      </main>

      <div className="flex h-[18px] shrink-0 items-center border-t border-b border-t-white border-b-[#c0c0c0] bg-[#f0f0f0] pr-[17px] pl-[136px]">
        <ScrollArrow label="Scroll left" d="M6 1l-4 3 4 3" />
        <div className="flex h-[15px] min-w-0 flex-1">
          <div className="flex-[37] bg-[#cdcdcd]" />
          <div className="flex-[9]" />
        </div>
        <ScrollArrow label="Scroll right" d="M2 1l4 3-4 3" />
      </div>

      <SelectionToolbar />

      <footer className="flex h-[16px] shrink-0 items-start overflow-hidden border-t-2 border-[#c8c8c8] bg-[#f0f0f0] pl-[9px]">
        <div className="w-[139px] border-x border-[#d4d4d4] pt-[3px] pl-[4px] leading-[18px]">Stopped</div>
        <div className="h-full min-w-0 flex-1" />
        <div className="h-full w-[179px] border-x border-[#d4d4d4]" />
      </footer>
    </div>
  )
}
